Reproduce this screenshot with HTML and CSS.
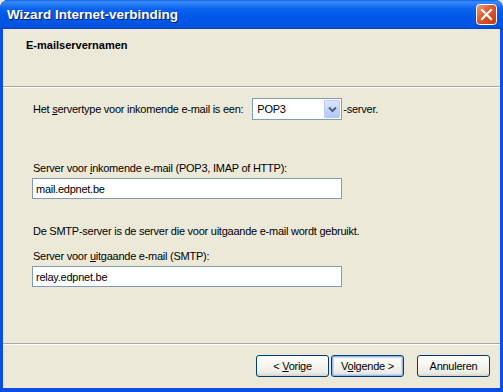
FILE: index.html
```html
<!DOCTYPE html>
<html lang="nl">
<head>
    <meta charset="UTF-8">
    <title>Wizard Internet-verbinding</title>
    <link rel="stylesheet" href="styles.css">
</head>
<body>
    <div class="window">
        <div class="titlebar">
            <span class="title">Wizard Internet-verbinding</span>
            <div class="close-btn">
                <svg width="21" height="21" viewBox="0 0 21 21">
                    <defs>
                        <linearGradient id="cg" x1="0" y1="0" x2="1" y2="1">
                            <stop offset="0" stop-color="#f0a082"/>
                            <stop offset="0.45" stop-color="#e0582f"/>
                            <stop offset="1" stop-color="#c0390f"/>
                        </linearGradient>
                    </defs>
                    <rect x="0.5" y="0.5" width="20" height="20" rx="3" fill="url(#cg)" stroke="#ffffff"/>
                    <path d="M6 6 L15 15 M15 6 L6 15" stroke="#ffffff" stroke-width="2.2" stroke-linecap="square"/>
                </svg>
            </div>
        </div>

        <div class="client">
            <div class="header">
                <div class="header-title">E-mailservernamen</div>
            </div>

            <div class="content">
                <div class="row">
                    <span>Het <u>s</u>ervertype voor inkomende e-mail is een:</span>
                    <div class="combo">
                        <span class="combo-value">POP3</span>
                        <span class="combo-btn">
                            <svg width="9" height="7" viewBox="0 0 9 7">
                                <path d="M1 1.5 L4.5 5 L8 1.5" fill="none" stroke="#4d6185" stroke-width="2"/>
                            </svg>
                        </span>
                    </div>
                    <span>-server.</span>
                </div>

                <label class="field-label first">Server voor <u>i</u>nkomende e-mail (POP3, IMAP of HTTP):</label>
                <input class="field" type="text" value="mail.edpnet.be">

                <p class="note">De SMTP-server is de server die voor uitgaande e-mail wordt gebruikt.</p>

                <label class="field-label">Server voor <u>u</u>itgaande e-mail (SMTP):</label>
                <input class="field" type="text" value="relay.edpnet.be">
            </div>

            <div class="footer">
                <button class="btn">&lt; <u>V</u>orige</button>
                <button class="btn default">V<u>o</u>lgende &gt;</button>
                <button class="btn cancel">Annuleren</button>
            </div>
        </div>
    </div>
</body>
</html>
```

FILE: styles.css
```css
body {
    margin: 0;
    background: #ece9d8;
    font-family: 'Liberation Sans', Arial, sans-serif;
    font-size: 11px;
    letter-spacing: -0.25px;
    color: #000000;
}

.window {
    width: 503px;
    height: 392px;
    display: flex;
    flex-direction: column;
    background: #0a4ee4;
    border-radius: 8px 8px 0 0;
    box-sizing: border-box;
    overflow: hidden;
}

.titlebar {
    height: 29px;
    flex-shrink: 0;
    display: flex;
    align-items: center;
    justify-content: space-between;
    padding: 0 6px 0 7px;
    background: linear-gradient(to bottom, #0a5fe8 0px, #3b8cf8 2px, #2a7cf5 4px, #0b62ec 9px, #0058e8 16px, #0055e5 24px, #0251df 27px, #0342c4 29px);
}

.title {
    color: #ffffff;
    font-weight: bold;
    font-size: 13.5px;
    letter-spacing: 0;
    text-shadow: 1px 1px 0 #0f1f7e;
    padding-bottom: 1px;
}

.close-btn {
    width: 21px;
    height: 21px;
}

.close-btn svg {
    display: block;
}

.client {
    flex: 1;
    display: flex;
    flex-direction: column;
    background: #ece9d8;
    margin: 0 3px 4px 3px;
}

.header {
    height: 58px;
    border-bottom: 1px solid #aca899;
    box-shadow: 0 1px 0 #ffffff;
    padding: 10px 0 0 23px;
    box-sizing: border-box;
}

.header-title {
    font-weight: bold;
    line-height: 13px;
    letter-spacing: 0;
}

.content {
    flex: 1;
    display: flex;
    flex-direction: column;
    align-items: flex-start;
    padding: 11px 0 0 30px;
    border-bottom: 1px solid #aca899;
}

.row {
    display: flex;
    align-items: center;
    height: 22px;
}

.row > span:first-child {
    margin-right: 9px;
}

.combo {
    width: 90px;
    height: 22px;
    box-sizing: border-box;
    border: 1px solid #7f9db9;
    background: #ffffff;
    display: flex;
    align-items: center;
    justify-content: space-between;
    padding: 1px;
    margin-right: 1px;
}

.combo-value {
    padding-left: 3px;
}

.combo-btn {
    width: 16px;
    height: 18px;
    box-sizing: border-box;
    border: 1px solid #b8ccf7;
    border-radius: 1px;
    background: linear-gradient(to bottom, #dce7ff, #c1d3fb 60%, #b2c8f6);
    display: flex;
    align-items: center;
    justify-content: center;
}

.field-label,
.note {
    display: block;
    line-height: 13px;
    margin: 0;
}

.field-label.first {
    margin-top: 42px;
}

.field {
    width: 310px;
    height: 21px;
    box-sizing: border-box;
    margin: 3px 0 0 -1px;
    border: 1px solid #7f9db9;
    background: #ffffff;
    font-family: 'Liberation Sans', Arial, sans-serif;
    font-size: 11px;
    letter-spacing: -0.25px;
    padding: 0 0 0 3px;
    color: #000000;
    outline: none;
}

.note {
    margin-top: 26px;
    margin-bottom: 12px;
}

.footer {
    height: 44px;
    flex-shrink: 0;
    border-top: 1px solid #ffffff;
    display: flex;
    align-items: center;
    justify-content: flex-end;
    padding: 0 10px 2px 0;
    box-sizing: border-box;
    gap: 2px;
}

.btn {
    width: 73px;
    height: 22px;
    box-sizing: border-box;
    border: 1px solid #003c74;
    border-radius: 3px;
    background: linear-gradient(to bottom, #ffffff, #f5f4ee 50%, #ecebe4 85%, #d6d0c5);
    font-family: 'Liberation Sans', Arial, sans-serif;
    font-size: 11px;
    letter-spacing: -0.25px;
    color: #000000;
    padding: 0;
}

.btn.default {
    box-shadow: inset 0 0 0 1px #9ab7ec, inset 0 0 0 2px #c6d6f6;
}

.btn.cancel {
    margin-left: 11px;
}
```
